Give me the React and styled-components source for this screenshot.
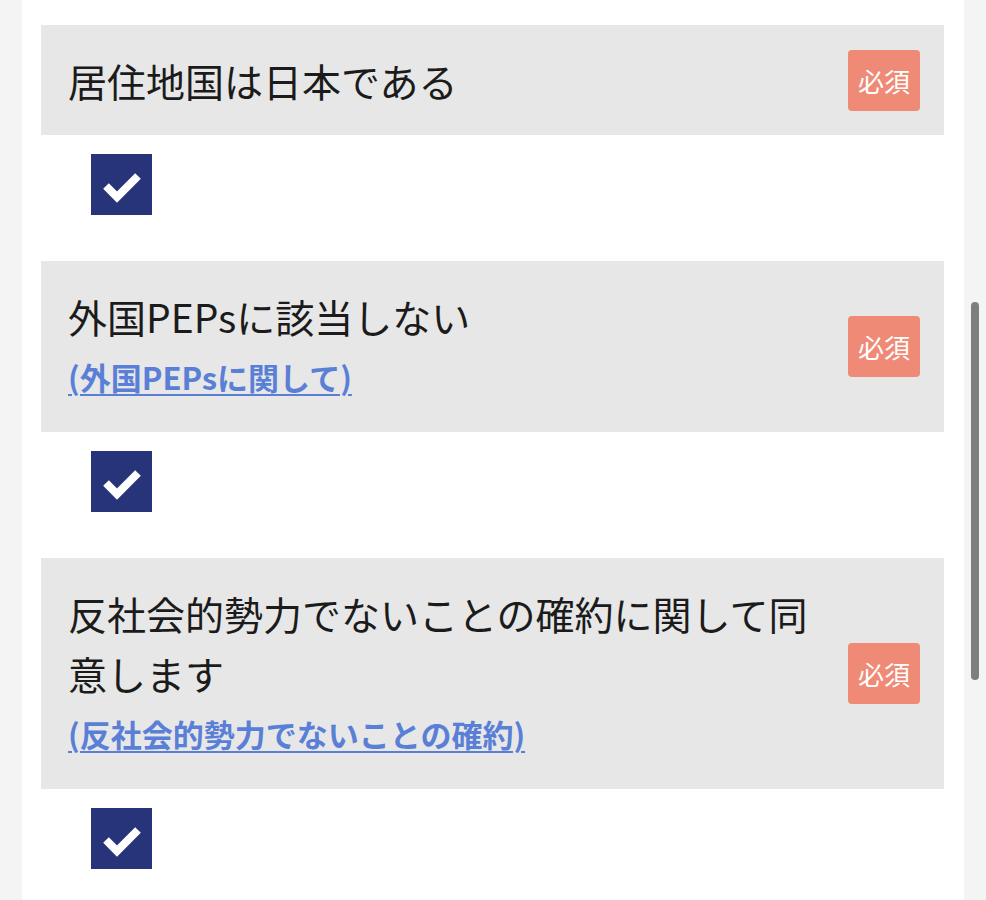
import React from "react";
import styled, { createGlobalStyle } from "styled-components";

const GlobalStyle = createGlobalStyle`
	html, body {
		margin: 0;
		padding: 0;
		height: 100%;
		overflow: hidden;
		background: #f4f4f4;
		font-family: "Noto Sans CJK JP", "Noto Sans", sans-serif;
	}
`;

const Page = styled.div`
	display: flex;
	height: 900px;
	background: #f4f4f4;
`;

const Gutter = styled.div`
	width: ${props => props.width}px;
	flex-shrink: 0;
	padding-top: ${props => props.thumbTop || 0}px;
	box-sizing: border-box;
`;

const Thumb = styled.div`
	width: 8px;
	height: 378px;
	margin-left: 7px;
	border-radius: 4px;
	background: #7f7f7f;
`;

const Panel = styled.div`
	flex: 1;
	background: #fff;
	padding: 25px 20px 0 19px;
	overflow: hidden;
`;

const Item = styled.section`
	margin-bottom: 46px;
`;

const Question = styled.div`
	display: flex;
	align-items: center;
	gap: 24px;
	padding: 24px 24px 24px 27px;
	background: #e7e7e7;
`;

const Body = styled.div`
	flex: 1;
	min-width: 0;
	padding: 1px 0;
`;

const Title = styled.div`
	font-size: 39px;
	line-height: 60px;
	color: #1b1b1b;
`;

const Link = styled.a`
	display: block;
	margin: 8px 0 7px;
	font-size: 31px;
	line-height: 46px;
	font-weight: 700;
	color: #5a7fd7;
	text-decoration: underline;
	text-decoration-thickness: 2px;
	text-underline-offset: 4px;
	cursor: pointer;
`;

const Badge = styled.span`
	flex-shrink: 0;
	padding: 10px;
	border-radius: 4px;
	background: #ef8a77;
	color: #fff;
	font-size: 26px;
	line-height: 41px;
`;

const CheckRow = styled.div`
	padding: 19px 0 0 50px;
`;

const CheckBox = styled.span`
	display: block;
	width: 61px;
	height: 61px;
	background: #28347a;
	svg {
		display: block;
	}
`;

const Check = () => (
	<CheckBox role="checkbox" aria-checked="true">
		<svg width="61" height="61" viewBox="0 0 61 61">
			<polyline points="15,32 26,43 47,22" fill="none" stroke="#fff" strokeWidth="8" strokeLinejoin="miter" />
		</svg>
	</CheckBox>
);

const items = [
	{ title: "居住地国は日本である" },
	{ title: "外国PEPsに該当しない", link: "(外国PEPsに関して)" },
	{ title: "反社会的勢力でないことの確約に関して同意します", link: "(反社会的勢力でないことの確約)" }
];

export default () => (
	<>
		<GlobalStyle />
		<Page>
			<Gutter width={22} />
			<Panel>
				{items.map((item, i) => (
					<Item key={i}>
						<Question>
							<Body>
								<Title>{item.title}</Title>
								{item.link && <Link>{item.link}</Link>}
							</Body>
							<Badge>必須</Badge>
						</Question>
						<CheckRow>
							<Check />
						</CheckRow>
					</Item>
				))}
			</Panel>
			<Gutter width={22} thumbTop={302}>
				<Thumb />
			</Gutter>
		</Page>
	</>
);
